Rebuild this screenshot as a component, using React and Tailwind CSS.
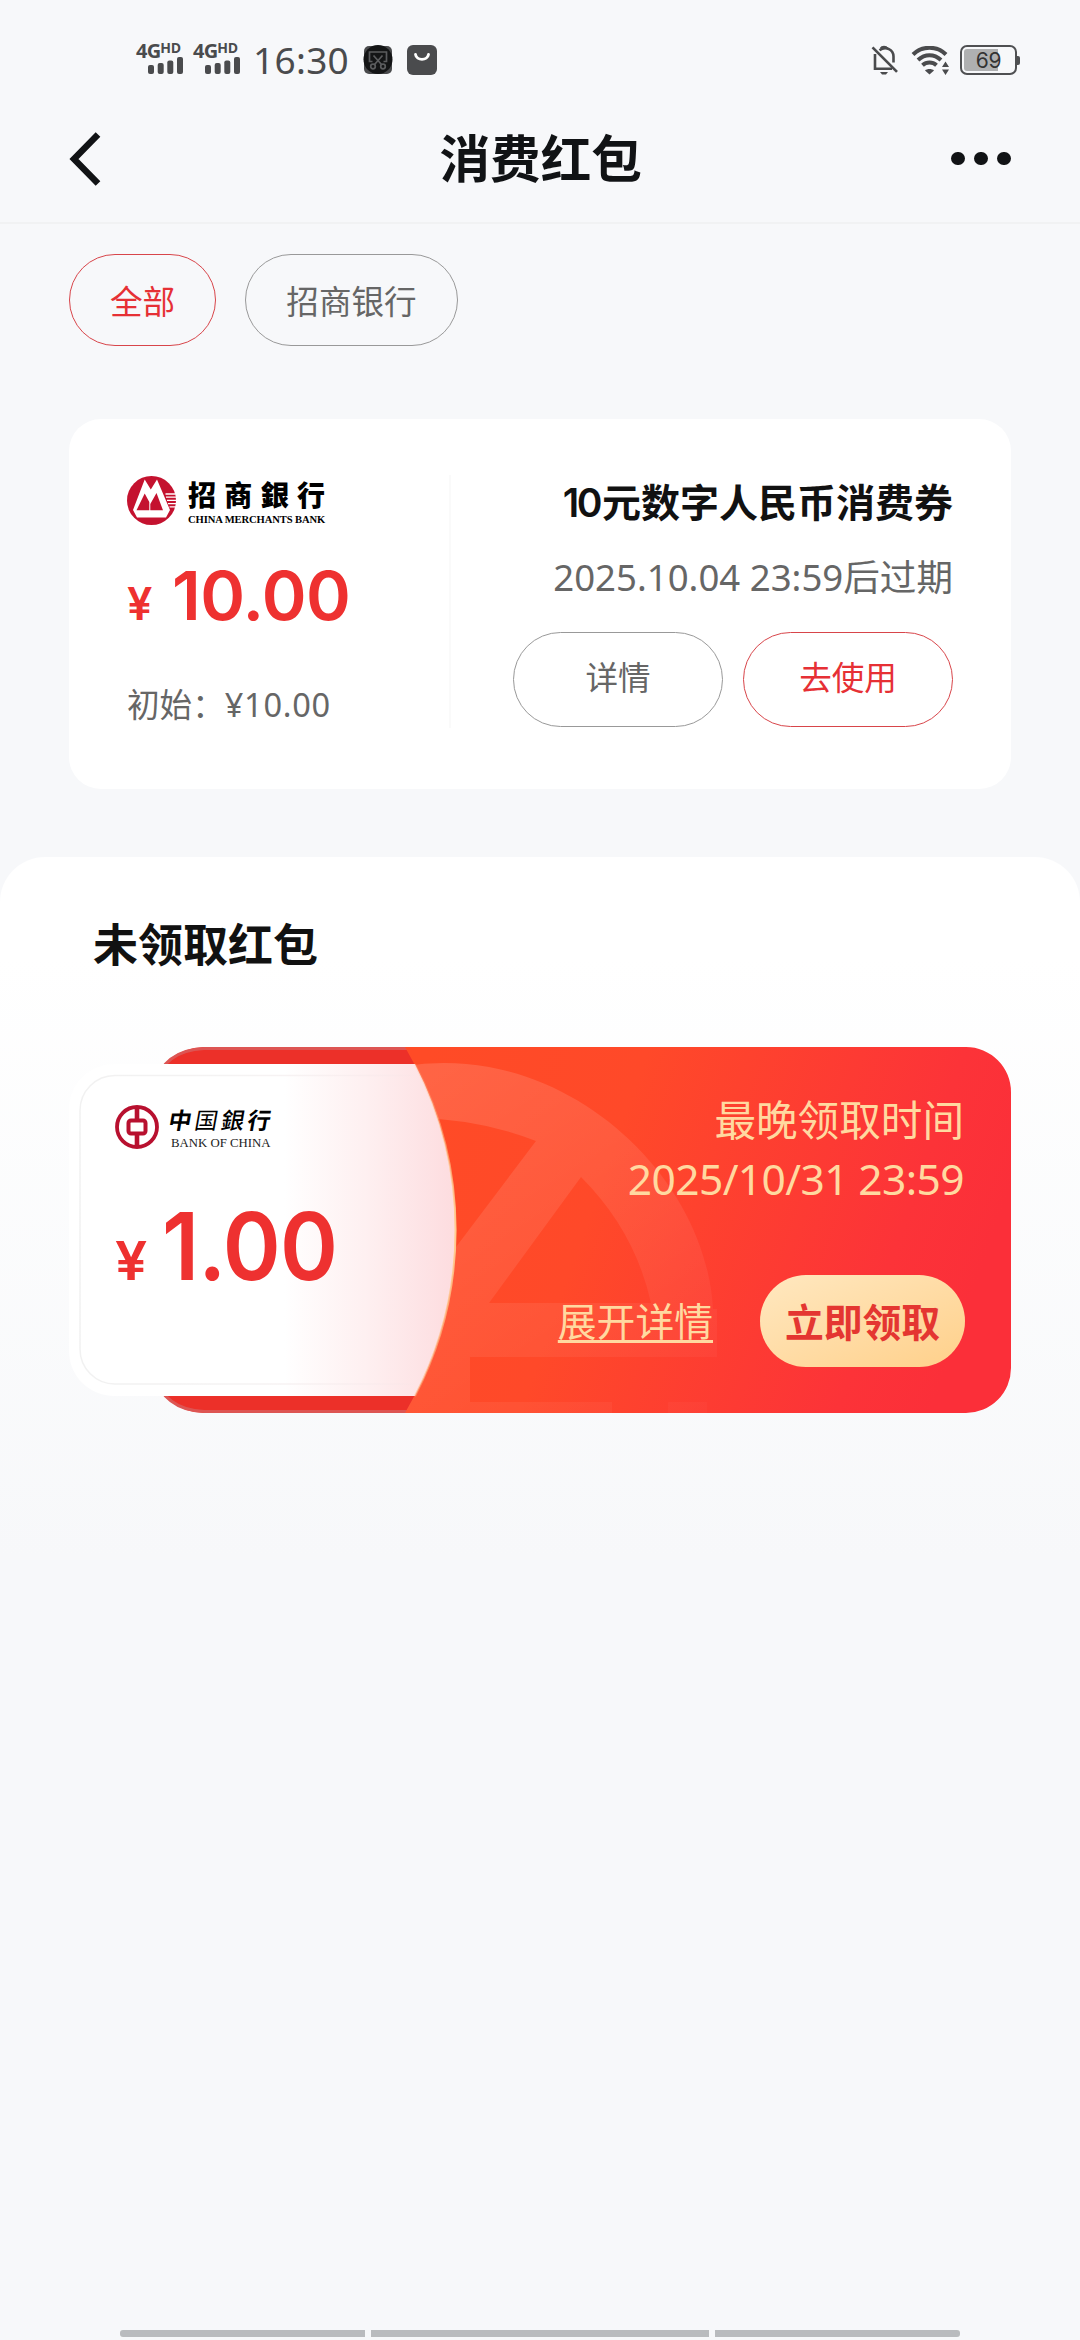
import React from 'react';

function SignalBars() {
  return (
    <div className="relative w-[47px] h-[32px] text-[#4a4b4d]">
      <div className="flex items-start leading-none font-['Open_Sans',sans-serif] font-bold">
        <span className="text-[20px] leading-[18px] tracking-[-0.8px]">4G</span>
        <span className="text-[14px] leading-[12px] tracking-[-0.3px]">HD</span>
      </div>
      <svg className="absolute left-[12px] top-[15px]" width="35" height="17" viewBox="0 0 35 17" fill="currentColor">
        <rect x="0" y="8" width="6" height="9" rx="2" />
        <rect x="9.7" y="6" width="6" height="11" rx="2" />
        <rect x="19.3" y="3.5" width="6" height="13.5" rx="2" />
        <rect x="29" y="0" width="6" height="17" rx="2" />
      </svg>
    </div>
  );
}

function StatusBar() {
  return (
    <div className="flex h-[60px] mt-[30px] items-start pl-[136px] pr-[63px] text-[#4a4b4d]">
      <div className="flex gap-[10px] pt-[12px]">
        <SignalBars />
        <SignalBars />
      </div>
      <span className="ml-[13px] text-[37px] leading-[60px] tracking-[0.3px]">16:30</span>
      <svg className="ml-[14px] mt-[15px]" width="30" height="30" viewBox="0 0 30 30">
        <rect x="1" y="1" width="28" height="28" rx="5" fill="#4a4b4d" />
        <circle cx="15" cy="14.5" r="14.5" fill="#141516" />
        <g fill="none" stroke="#5b5c5e" strokeWidth="1.7">
          <path d="M9.5 16.500H6.500V7H23.500V16.500H20.500" />
          <path d="M10.500 10.500L18.500 19.500M19.500 10.500L11.500 19.500" />
          <circle cx="10" cy="21.500" r="2.300" />
          <circle cx="20" cy="21.500" r="2.300" />
        </g>
      </svg>
      <svg className="ml-[14px] mt-[15px]" width="30" height="30" viewBox="0 0 30 30">
        <rect width="30" height="30" rx="6" fill="#4a4b4d" />
        <path d="M8.500 9.500C9.500 16 20.500 16 21.500 9.500" fill="none" stroke="#fff" strokeWidth="2.800" strokeLinecap="round" />
      </svg>
      <div className="ml-auto flex items-start pt-[15px]">
        <svg width="28" height="30" viewBox="0 0 28 30" fill="none" stroke="#4a4b4d" strokeWidth="2.600">
          <path d="M1.500 2.300L26 26.800" />
          <path d="M4 9V23.700H21" />
          <path d="M8.500 5.200C15 .5 22.500 5 22.500 11.500V17.500" />
          <path d="M10 3.500C11 1.500 15 1.500 16 3.500" />
          <path d="M9 27H17L15 29.500H11Z" fill="#4a4b4d" stroke="none" />
        </svg>
        <svg className="ml-[12px] mt-[1px]" width="39" height="29" viewBox="0 0 39 29" fill="none" stroke="#4a4b4d" strokeWidth="4">
          <path d="M2 8.500C11 -.5 26 -.5 35 8.500" />
          <path d="M7 14C14 7.500 23 7.500 30 14" />
          <path d="M11.500 19.300C15.500 15.700 21.500 15.700 25.500 19.300" />
          <path d="M14 24.500C16 22.500 21 22.500 23 24.500L18.500 28.500Z" fill="#4a4b4d" stroke="none" />
          <path d="M31 21L34.500 15.500L38 21ZM31 23.500L34.500 29L38 23.500Z" fill="#4a4b4d" stroke="none" />
        </svg>
        <div className="relative ml-[10px] flex h-[30px] w-[57px] rounded-[7px] border-[2px] border-[#4f5052] p-[2px]">
          <span className="h-[22px] w-[34px] rounded-l-[3px] bg-[#afb0b1]" />
          <span className="absolute inset-0 text-center font-['Inter',sans-serif] text-[21px] leading-[27px] tracking-[-0.300px] text-[#333]">69</span>
          <span className="absolute -right-[5px] top-[9px] h-[9px] w-[3px] rounded-r-[2px] bg-[#4f5052]" />
        </div>
      </div>
    </div>
  );
}

function Header() {
  return (
    <header className="flex h-[134px] items-center justify-between border-b-[2px] border-[#f1f2f3] pl-[69px] pr-[69px] pb-0">
      <svg className="mt-[6px]" width="33" height="56" viewBox="0 0 33 56">
        <path d="M29 3.500L5 28L29 52.500" fill="none" stroke="#111315" strokeWidth="6.500" />
      </svg>
      <h1 className="ml-[28px] mt-[6px] text-[50.600px] leading-[60px] font-bold text-[#111315]">消费红包</h1>
      <div className="mt-[5px] flex gap-[9.600px]">
        <span className="size-[13.500px] rounded-full bg-[#111315]" />
        <span className="size-[13.500px] rounded-full bg-[#111315]" />
        <span className="size-[13.500px] rounded-full bg-[#111315]" />
      </div>
    </header>
  );
}

function MerchantsLogo() {
  return (
    <div className="flex h-[50px] items-start">
      <svg width="49" height="49" viewBox="0 0 49 49" className="mt-px">
        <circle cx="24.500" cy="24.500" r="24.500" fill="#c4122f" />
        <path d="M17.700 3.500L23.800 13.500L30 3.500L43 34L39 41.500H10L6 34Z" fill="#fff" />
        <path d="M17.700 17.500L22.300 34.300H9.500ZM17.700 17.500L22.300 26V34.300ZM29.500 17L36 34.300H23.300V28Z" fill="#c4122f" />
        <path d="M38.500 18H48.500M39 21.200H49M40 24.400H49M41 27.600H49M42.500 30.800H48.500" stroke="#fff" strokeWidth="1.300" />
      </svg>
      <div className="ml-[12px] flex flex-col">
        <span className="flex w-[137px] justify-between font-['Noto_Sans_CJK_TC',sans-serif] text-[28px] leading-[38px] font-black text-black">
          <b>招</b><b>商</b><b>銀</b><b>行</b>
        </span>
        <span className="mt-[1px] whitespace-nowrap font-['Liberation_Serif',serif] text-[10.600px] leading-[12px] font-bold tracking-[-0.120px] text-black">CHINA MERCHANTS BANK</span>
      </div>
    </div>
  );
}

function BankOfChinaLogo() {
  return (
    <div className="flex h-[46px] items-start">
      <svg width="44" height="44" viewBox="0 0 44 44" fill="none" stroke="#b8102f">
        <circle cx="22" cy="22" r="20" strokeWidth="3.800" />
        <rect x="13.500" y="15.500" width="17" height="13" rx="2.500" strokeWidth="4" />
        <path d="M22 2V14M22 30V42" strokeWidth="4.600" />
      </svg>
      <div className="ml-[10px] flex flex-col">
        <span className="flex w-[102px] skew-x-[-10deg] justify-between font-['Noto_Sans_CJK_TC',sans-serif] text-[23px] leading-[28px] font-medium text-black">
          <b className="font-bold">中</b><b className="font-normal">国</b><b className="font-medium">銀</b><b className="font-bold">行</b>
        </span>
        <span className="ml-[2px] mt-[3px] whitespace-nowrap font-['Liberation_Serif',serif] text-[12.800px] leading-[14px] text-[#222]">BANK OF CHINA</span>
      </div>
    </div>
  );
}

function VoucherCard() {
  return (
    <section className="mx-[69px] mt-[73px] flex h-[370px] rounded-[32px] bg-white pl-[58px] pr-[58px] pt-[56px]">
      <div className="flex h-[253px] w-[324px] flex-col border-r-[2px] border-[#fafafa]">
        <MerchantsLogo />
        <div className="mt-[28px] flex h-[84px] items-baseline font-['Inter',sans-serif] font-semibold text-[#ee3130]">
          <span className="w-[45px] text-[45px] leading-[84px]">¥</span>
          <span className="text-[68px] leading-[84px] tracking-[-0.600px]">10.00</span>
        </div>
        <div className="mt-[44px] whitespace-nowrap text-[32.600px] leading-[48px] text-[#666]">初始：<span className="tracking-[0.700px]">¥10.00</span></div>
      </div>
      <div className="flex flex-1 flex-col items-end">
        <h2 className="whitespace-nowrap text-[39px] leading-[54px] font-bold text-[#111]"><span className="mr-[2px] font-['Inter',sans-serif] font-semibold tracking-[-2.500px]">10</span>元数字人民币消费券</h2>
        <p className="mt-[20px] whitespace-nowrap text-[36.600px] leading-[54px] text-[#666]">2025.10.04 23:59后过期</p>
        <div className="mt-[28px] flex gap-[20px]">
          <button className="h-[95px] w-[210px] rounded-full border border-[#999] pb-[3px] text-[32.600px] text-[#666]">详情</button>
          <button className="h-[95px] w-[210px] rounded-full border border-[#d8454a] pb-[3px] text-[32.600px] text-[#e63035]">去使用</button>
        </div>
      </div>
    </section>
  );
}

function CardArt() {
  return (
    <svg className="absolute inset-0" width="942" height="366" viewBox="0 0 942 366">
      <defs>
        <linearGradient id="orange" x1="336" y1="60" x2="900" y2="260" gradientUnits="userSpaceOnUse">
          <stop offset="0" stopColor="#ff4b26" />
          <stop offset="0.350" stopColor="#ff4929" />
          <stop offset="0.850" stopColor="#fc3338" />
          <stop offset="1" stopColor="#fb2f39" />
        </linearGradient>
        <linearGradient id="mark" x1="400" y1="0" x2="640" y2="366" gradientUnits="userSpaceOnUse">
          <stop offset="0" stopColor="#fff" stopOpacity="0.140" />
          <stop offset="1" stopColor="#fff" stopOpacity="0.020" />
        </linearGradient>
        <linearGradient id="pink" x1="215" y1="0" x2="386" y2="0" gradientUnits="userSpaceOnUse">
          <stop offset="0" stopColor="#fff" />
          <stop offset="0.500" stopColor="#feeff0" />
          <stop offset="1" stopColor="#fddcdf" />
        </linearGradient>
        <linearGradient id="gold" x1="0" y1="17" x2="0" y2="349" gradientUnits="userSpaceOnUse">
          <stop offset="0" stopColor="#ffb27c" stopOpacity="0.200" />
          <stop offset="0.500" stopColor="#ffcf90" />
          <stop offset="1" stopColor="#ffb27c" stopOpacity="0.500" />
        </linearGradient>
        <linearGradient id="line" x1="11" y1="0" x2="345" y2="0" gradientUnits="userSpaceOnUse">
          <stop offset="0" stopColor="#f1f1f1" />
          <stop offset="0.500" stopColor="#f5f3f3" />
          <stop offset="1" stopColor="#f5e4e6" stopOpacity="0.200" />
        </linearGradient>
        <clipPath id="clip">
          <path d="M336 0H897A45 45 0 0 1 942 45V321A45 45 0 0 1 897 366H336A360 360 0 0 0 336 0Z" />
        </clipPath>
      </defs>
      <path d="M350 0H135Q95 2 84 40V326Q95 364 135 366H350Z" fill="#ec3029" />
      <path d="M84 40Q95 3 135 1.500H338M84 326Q95 363 135 364.500H338" fill="none" stroke="#dd5553" strokeWidth="3" />
      <g clipPath="url(#clip)">
        <rect x="330" width="612" height="366" fill="url(#orange)" />
        <path
          fillRule="evenodd"
          fill="url(#mark)"
          d="M330 20Q374 12 420 20C540 42 638 150 644 262L648 262V310H401V355H543V366H330ZM330 72Q400 68 467 94L384 204L330 268ZM512 130Q566 184 582 256H420ZM599 355H638V366H599Z"
        />
      </g>
      <path d="M45 17H346A360 360 0 0 1 346 349H45A45 45 0 0 1 0 304V62A45 45 0 0 1 45 17Z" fill="url(#pink)" />
      <path d="M345 28.500H46A35 35 0 0 0 11 63.500V302A35 35 0 0 0 46 337H345" fill="none" stroke="url(#line)" strokeWidth="1.500" />
      <path d="M346 17A360 360 0 0 1 346 349" fill="none" stroke="url(#gold)" strokeWidth="2" />
    </svg>
  );
}

function RedPacketCard() {
  return (
    <article className="relative mx-[69px] mt-[70px] h-[366px]">
      <CardArt />
      <div className="relative flex h-full justify-between pl-[46px] pr-[46px]">
        <div className="flex flex-col pt-[58px]">
          <BankOfChinaLogo />
          <div className="mt-[40px] flex h-[110px] items-baseline font-['Inter',sans-serif] font-semibold text-[#ee3130]">
            <span className="w-[47px] text-[54px] leading-[110px]"><span className="inline-block origin-left scale-x-[1.060]">¥</span></span>
            <span className="origin-left scale-x-[0.940] text-[93.500px] leading-[110px] tracking-[-1px]">1.00</span>
          </div>
        </div>
        <div className="flex flex-col items-end whitespace-nowrap text-[#ffd9a0]">
          <p className="mt-[44px] mr-[1px] text-[41.600px] leading-[58px]">最晚领取时间</p>
          <p className="mr-px text-[42.500px] leading-[59px] tracking-[-0.600px]">2025/10/31 23:59</p>
          <div className="mt-[67px] flex h-[92px] items-center gap-[47px]">
            <a className="text-[38.800px] leading-[54px] underline decoration-[3px] underline-offset-[4px]">展开详情</a>
            <button className="h-[92px] w-[205px] rounded-full bg-linear-to-br from-[#ffe8c0] to-[#ffd08a] pt-px text-[38.800px] leading-[54px] font-bold text-[#e43631]">立即领取</button>
          </div>
        </div>
      </div>
    </article>
  );
}

export default function App() {
  return (
    <div lang="zh-CN" className="flex h-[2340px] w-[1080px] flex-col overflow-hidden bg-[#f7f8fa] font-['Noto_Sans','Noto_Sans_CJK_SC',sans-serif]">
      <StatusBar />
      <Header />
      <nav className="flex gap-[29px] pl-[69px] pt-[30px]">
        <button className="h-[92px] w-[147px] rounded-full border border-[#d8454a] pt-[5px] text-[32.600px] text-[#e63035]">全部</button>
        <button className="h-[92px] w-[213px] rounded-full border border-[#999] pt-[5px] text-[32.600px] text-[#666]">招商银行</button>
      </nav>
      <VoucherCard />
      <main className="mt-[68px] flex-1 rounded-t-[45px] bg-[linear-gradient(to_bottom,#ffffff_0px,#ffffff_100px,#f7f8fa_700px)] pt-[56px]">
        <h2 className="pl-[93px] text-[45px] leading-[64px] font-bold text-[#111]">未领取红包</h2>
        <RedPacketCard />
      </main>
      <footer className="mb-[3px] flex h-[7px] justify-center gap-[6px]">
        <span className="w-[245px] rounded-l-[3px] bg-[#b9bbbe]" />
        <span className="w-[338px] bg-[#b9bbbe]" />
        <span className="w-[245px] rounded-r-[3px] bg-[#b9bbbe]" />
      </footer>
    </div>
  );
}
